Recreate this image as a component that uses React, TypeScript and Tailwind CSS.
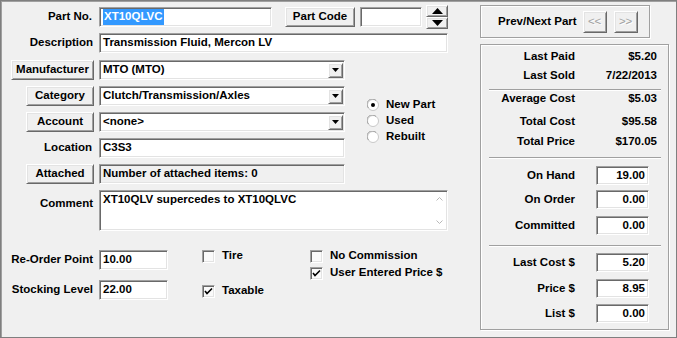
import React from "react";

const sunken =
  "border border-t-[#a0a0a0] border-l-[#a0a0a0] border-b-white border-r-white shadow-[inset_1px_1px_0_#696969,inset_-1px_-1px_0_#e3e3e3]";
const raised =
  "border border-t-white border-l-white border-b-[#696969] border-r-[#696969] shadow-[inset_1px_1px_0_#e3e3e3,inset_-1px_-1px_0_#a0a0a0] bg-[#f0f0f0]";
const etched =
  "border border-[#a0a0a0] shadow-[inset_1px_1px_0_#ffffff,1px_1px_0_#ffffff]";

function Btn({ className = "", children }: { className?: string; children: React.ReactNode }) {
  return (
    <div className={`${raised} flex items-center justify-center whitespace-nowrap ${className}`}>
      {children}
    </div>
  );
}

function Field({ className = "", children }: { className?: string; children?: React.ReactNode }) {
  return (
    <div className={`${sunken} bg-white flex items-center pl-[3px] whitespace-nowrap overflow-hidden ${className}`}>
      {children}
    </div>
  );
}

function DropArrow() {
  return (
    <div className={`${raised} w-[15px] h-[15px] flex items-center justify-center`}>
      <svg width="7" height="4" viewBox="0 0 7 4">
        <polygon points="0,0 7,0 3.5,4" fill="#000" />
      </svg>
    </div>
  );
}

function Select({ children }: { children: React.ReactNode }) {
  return (
    <div className={`${sunken} bg-white h-[20px] w-[246px] flex items-center pl-[3px] pr-[1px]`}>
      <span className="flex-1 whitespace-nowrap">{children}</span>
      <DropArrow />
    </div>
  );
}

function Label({ children, className = "" }: { children: React.ReactNode; className?: string }) {
  return <div className={`w-[93px] shrink-0 text-right pr-[1px] whitespace-nowrap ${className}`}>{children}</div>;
}

function BtnCell({ children, className = "" }: { children: React.ReactNode; className?: string }) {
  return (
    <div className="w-[93px] shrink-0 flex justify-end">
      <Btn className={`h-[20px] ${className}`}>{children}</Btn>
    </div>
  );
}

function Radio({ checked }: { checked?: boolean }) {
  return (
    <svg width="12" height="12" viewBox="0 0 12 12">
      <circle cx="6" cy="6" r="5.5" fill="#fff" stroke="#c8c8c8" />
      <path d="M1.5 9 A5 5 0 0 1 9 1.5" stroke="#a0a0a0" fill="none" />
      {checked && <circle cx="6" cy="6" r="2" fill="#000" />}
    </svg>
  );
}

function Check({ checked }: { checked?: boolean }) {
  return (
    <div className={`${sunken} w-[13px] h-[13px] bg-[#fafafa] flex items-center justify-center`}>
      {checked && (
        <svg width="9" height="9" viewBox="0 0 9 9">
          <path d="M1 4 L3 6.5 L8 1.5" stroke="#000" strokeWidth="1.6" fill="none" />
        </svg>
      )}
    </div>
  );
}

function Sep({ className = "" }: { className?: string }) {
  return <div className={`h-[2px] border-t border-t-[#a0a0a0] border-b border-b-white ml-[8px] mr-[7px] ${className}`} />;
}

function StatRow({ label, value, className = "" }: { label: string; value: string; className?: string }) {
  return (
    <div className={`flex items-center h-[16px] ${className}`}>
      <div className="w-[94px] text-right whitespace-nowrap">{label}</div>
      <div className="flex-1 text-right pr-[11px] whitespace-nowrap">{value}</div>
    </div>
  );
}

function InRow({ label, value, className = "" }: { label: string; value: string; className?: string }) {
  return (
    <div className={`flex items-center h-[19px] ${className}`}>
      <div className="w-[94px] text-right whitespace-nowrap">{label}</div>
      <div className={`${sunken} bg-white ml-[21px] w-[53px] h-[19px] flex items-center justify-end pr-[3px]`}>{value}</div>
    </div>
  );
}

export default function App() {
  return (
    <div className="w-[677px] h-[338px] bg-[#f0f0f0] border border-[#7f7f7f] shadow-[inset_1px_1px_0_#a0a0a0] flex text-[11.5px] font-bold text-black leading-none [font-family:'Liberation_Sans',Arial,sans-serif]">
      {/* Left column */}
      <div className="w-[479px] shrink-0 flex flex-col pt-[6px]">
        {/* Part No */}
        <div className="flex items-center h-[20px]">
          <Label className="pr-[2px]">Part No.</Label>
          <Field className="ml-[5px] w-[173px] h-[20px]">
            <span className="bg-[#3399ff] text-white px-[1px] py-[2px]">XT10QLVC</span>
          </Field>
          <Btn className="ml-[13px] w-[70px] h-[20px]">Part Code</Btn>
          <Field className="ml-[5px] w-[62px] h-[20px]" />
          <div className="ml-[4px] flex flex-col">
            <Btn className="w-[22px] h-[12px]">
              <svg width="11" height="6" viewBox="0 0 11 6">
                <polygon points="5.5,0 11,6 0,6" fill="#000" />
              </svg>
            </Btn>
            <Btn className="w-[22px] h-[12px]">
              <svg width="11" height="6" viewBox="0 0 11 6">
                <polygon points="0,0 11,0 5.5,6" fill="#000" />
              </svg>
            </Btn>
          </div>
        </div>
        {/* Description */}
        <div className="flex items-center h-[20px] mt-[6px]">
          <Label>Description</Label>
          <Field className="ml-[5px] w-[349px] h-[20px]">Transmission Fluid, Mercon LV</Field>
        </div>
        {/* Rows 3-7 with radio group */}
        <div className="flex">
          <div className="flex flex-col">
            <div className="flex items-center h-[20px] mt-[7px]">
              <BtnCell className="w-[83px]">Manufacturer</BtnCell>
              <div className="ml-[5px]">
                <Select>MTO (MTO)</Select>
              </div>
            </div>
            <div className="flex items-center h-[20px] mt-[6px]">
              <BtnCell className="w-[68px]">Category</BtnCell>
              <div className="ml-[5px]">
                <Select>Clutch/Transmission/Axles</Select>
              </div>
            </div>
            <div className="flex items-center h-[20px] mt-[6px]">
              <BtnCell className="w-[68px]">Account</BtnCell>
              <div className="ml-[5px]">
                <Select>&lt;none&gt;</Select>
              </div>
            </div>
            <div className="flex items-center h-[20px] mt-[6px]">
              <Label className="pr-[2px]">Location</Label>
              <Field className="ml-[5px] w-[246px] h-[20px]">C3S3</Field>
            </div>
            <div className="flex items-center h-[20px] mt-[6px]">
              <BtnCell className="w-[68px]">Attached</BtnCell>
              <div className={`${sunken} bg-[#f0f0f0] ml-[5px] w-[246px] h-[20px] flex items-center pl-[3px] whitespace-nowrap`}>
                Number of attached items: 0
              </div>
            </div>
          </div>
          <div className="ml-[22px] pt-[44px] flex flex-col">
            <div className="flex items-center h-[16px]">
              <Radio checked />
              <span className="ml-[7px]">New Part</span>
            </div>
            <div className="flex items-center h-[16px]">
              <Radio />
              <span className="ml-[7px]">Used</span>
            </div>
            <div className="flex items-center h-[16px]">
              <Radio />
              <span className="ml-[7px]">Rebuilt</span>
            </div>
          </div>
        </div>
        {/* Comment */}
        <div className="flex items-start mt-[6px]">
          <Label className="pt-[8px]">Comment</Label>
          <div className={`${sunken} bg-white ml-[5px] w-[349px] h-[41px] flex`}>
            <div className="flex-1 pl-[3px] pt-[3px] whitespace-nowrap">XT10QLV supercedes to XT10QLVC</div>
            <div className="w-[16px] flex flex-col items-center justify-between py-[6px]">
              <svg width="7" height="4" viewBox="0 0 7 4">
                <path d="M0.5 3.5 L3.5 0.5 L6.5 3.5" stroke="#b8b8b8" fill="none" />
              </svg>
              <svg width="7" height="4" viewBox="0 0 7 4">
                <path d="M0.5 0.5 L3.5 3.5 L6.5 0.5" stroke="#b8b8b8" fill="none" />
              </svg>
            </div>
          </div>
        </div>
        {/* Bottom section */}
        <div className="flex mt-[17px]">
          <div className="flex flex-col">
            <div className="flex items-center h-[20px] mt-[2px]">
              <Label>Re-Order Point</Label>
              <Field className="ml-[5px] w-[69px] h-[20px]">10.00</Field>
            </div>
            <div className="flex items-center h-[20px] mt-[10px]">
              <Label>Stocking Level</Label>
              <Field className="ml-[5px] w-[69px] h-[20px]">22.00</Field>
            </div>
          </div>
          <div className="ml-[34px] w-[108px] flex flex-col">
            <div className="flex items-center h-[16px]">
              <Check />
              <span className="ml-[7px]">Tire</span>
            </div>
            <div className="flex items-center h-[16px] mt-[19px]">
              <Check checked />
              <span className="ml-[7px]">Taxable</span>
            </div>
          </div>
          <div className="flex flex-col">
            <div className="flex items-center h-[16px]">
              <Check />
              <span className="ml-[7px]">No Commission</span>
            </div>
            <div className="flex items-center h-[16px] mt-[1px]">
              <Check checked />
              <span className="ml-[7px]">User Entered Price $</span>
            </div>
          </div>
        </div>
      </div>

      {/* Right column */}
      <div className="w-[189px] shrink-0 flex flex-col">
        <div className={`${etched} mt-[4px] w-[170px] h-[33px] flex items-center pl-[17px]`}>
          <span className="whitespace-nowrap">Prev/Next Part</span>
          <Btn className="ml-[6px] w-[24px] h-[22px] font-normal text-[#a0a0a0] [text-shadow:1px_1px_0_#fff]">&lt;&lt;</Btn>
          <Btn className="ml-[7px] w-[24px] h-[22px] font-normal text-[#a0a0a0] [text-shadow:1px_1px_0_#fff]">&gt;&gt;</Btn>
        </div>
        <div className={`${etched} mt-[6px] w-[189px] h-[286px] flex flex-col`}>
          <StatRow label="Last Paid" value="$5.20" className="mt-[4px]" />
          <StatRow label="Last Sold" value="7/22/2013" className="mt-[3px]" />
          <Sep className="mt-[5px]" />
          <StatRow label="Average Cost" value="$5.03" />
          <StatRow label="Total Cost" value="$95.58" className="mt-[7px]" />
          <StatRow label="Total Price" value="$170.05" className="mt-[4px]" />
          <Sep className="mt-[7px]" />
          <InRow label="On Hand" value="19.00" className="mt-[7px]" />
          <InRow label="On Order" value="0.00" className="mt-[5px]" />
          <InRow label="Committed" value="0.00" className="mt-[7px]" />
          <Sep className="mt-[10px]" />
          <InRow label="Last Cost $" value="5.20" className="mt-[6px]" />
          <InRow label="Price $" value="8.95" className="mt-[7px]" />
          <InRow label="List $" value="0.00" className="mt-[6px]" />
        </div>
      </div>
    </div>
  );
}
